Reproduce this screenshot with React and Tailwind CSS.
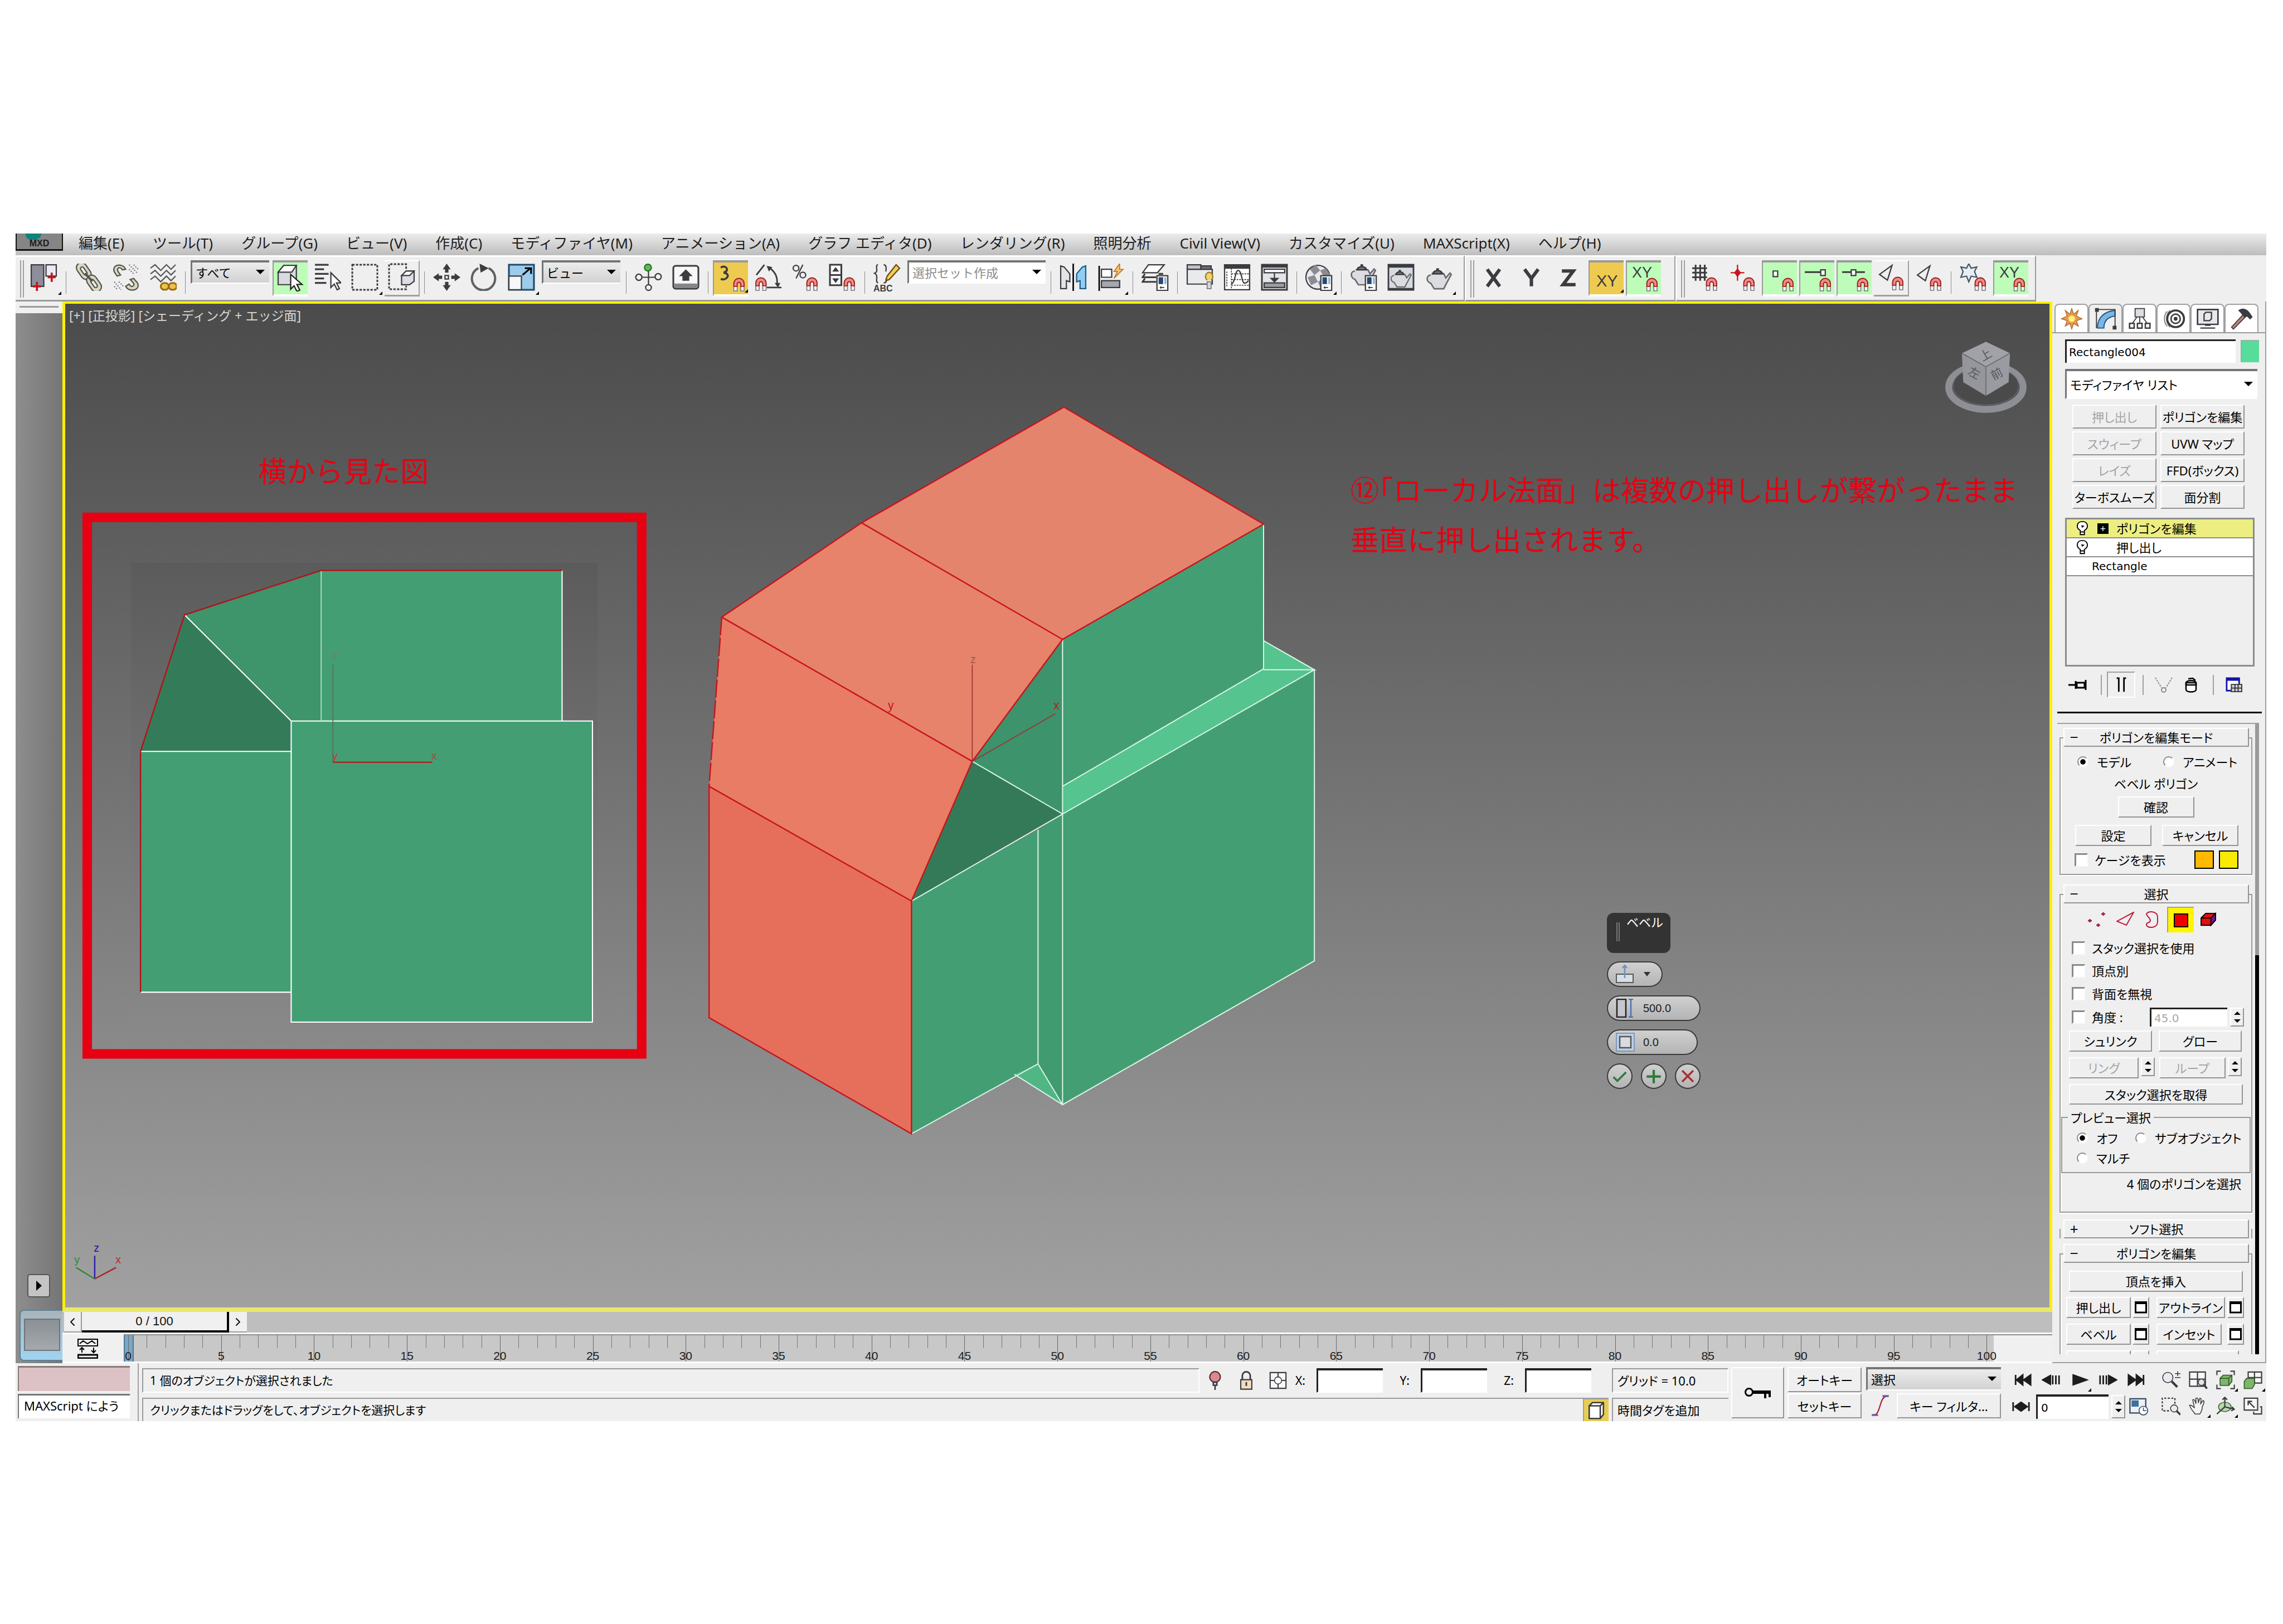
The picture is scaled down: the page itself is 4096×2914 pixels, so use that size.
import { ChevronLeft, ChevronRight } from 'lucide-react'

const MENUS = [
  '編集(E)', 'ツール(T)', 'グループ(G)', 'ビュー(V)', '作成(C)', 'モディファイヤ(M)', 'アニメーション(A)',
  'グラフ エディタ(D)', 'レンダリング(R)', '照明分析', 'Civil View(V)', 'カスタマイズ(U)', 'MAXScript(X)', 'ヘルプ(H)',
]

const INK = '#3b3b40'

function Svg({ children, className = 'size-[49px]', box = '0 0 24 24' }) {
  return (
    <svg viewBox={box} className={className} fill="none" stroke={INK} strokeWidth="1.1" aria-hidden="true">
      {children}
    </svg>
  )
}

function Magnet({ x = 12, y = 12 }) {
  return (
    <g transform={`translate(${x} ${y})`}>
      <path d="M1.5 11.5V5a4.5 4.5 0 0 1 9 0v6.5H7.6V5.5a1.6 1.6 0 0 0-3.2 0v6z" fill="#fff" stroke="#777" strokeWidth=".8" />
      <path d="M1.5 7.5V5a4.5 4.5 0 0 1 9 0v2.5H7.6v-2a1.6 1.6 0 0 0-3.2 0v2z" fill="#ee8b86" stroke="#a01c1c" strokeWidth=".9" />
    </g>
  )
}

function Teapot({ x = 0, y = 0, s = 1 }) {
  return (
    <g transform={`translate(${x} ${y}) scale(${s})`}>
      <path d="M5 7h9l1.5 3 3-3.5 1 1-3.5 6.5-2 4H7l-2.5-4C1 13 1 8 4.5 8" fill="#dadcdf" stroke="#6b6b70" />
      <path d="M6 7c1-3 6-3 7 0z" fill="#77787c" stroke={INK} />
      <path d="M9.5 4.5V3" strokeWidth="2" />
    </g>
  )
}

function Card({ x = 13, y = 10 }) {
  return (
    <g transform={`translate(${x} ${y})`}>
      <rect x=".6" y=".6" width="9.5" height="13" fill="#fff" />
      <path d="M2 2h4v6H2z" fill="#27496f" stroke="none" />
      <path d="M7 2h2v6H7z" fill="#9fb8d0" stroke="none" />
      <path d="M3 11h4M4 10v2" strokeWidth=".8" />
    </g>
  )
}

const ICONS = {
  undoView: (
    <>
      <path d="M1 1h11v19H1z" fill="#8d8e9a" />
      <path d="M14 1h9v10h-9z" fill="#e9ebf3" />
      <path d="M6 16v8M2.5 20h7M19 8v8M15.5 12h7" stroke="#c8141c" strokeWidth="1.8" />
    </>
  ),
  link: (
    <g stroke="#55544c">
      <rect x="0" y="2" width="16" height="9" rx="4.5" transform="rotate(55 8 6.500)" fill="#d9d6c4" />
      <rect x="4" y="5" width="8" height="3" rx="1.500" transform="rotate(55 8 6.500)" fill="#f0f0f0" />
      <rect x="9" y="13" width="16" height="9" rx="4.5" transform="rotate(55 17 17.500)" fill="#d9d6c4" />
      <rect x="13" y="16" width="8" height="3" rx="1.500" transform="rotate(55 17 17.500)" fill="#f0f0f0" />
      <path d="m9 8.500 6.500 7" strokeWidth="2" />
    </g>
  ),
  unlink: (
    <g stroke="#55544c">
      <path d="M12 5C10 0 2 0 1.500 5c0 3 2 4 3 6l3-1C6 8 4 6 5 4.500c1-1.500 3-1 4 1z" fill="#d9d6c4" />
      <path d="M12 20c3 5 11 4 11-1 0-3-3-4-4-6l-3 1c2 2 4 4 3 5-1 2-3 1-4-1z" fill="#d9d6c4" />
      <path d="M15 1l7 7M15 5l4 4M19 1l4 4M2 16l6 7M2 20l3 3M6 16l4 4" stroke="#777" strokeDasharray="1 1.200" />
    </g>
  ),
  bind: (
    <>
      <path d="M1 4l4-3 5 5 5-5 4 4 4-4M1 9l4-3 5 5 5-5 4 4 4-4M1 14l4-3 5 5 5-5 4 4 4-4" stroke="#55565a" />
      <rect x="10" y="17" width="7" height="6" rx="3" fill="#efc04a" stroke="#9a6c0c" strokeWidth="1.500" />
      <rect x="17" y="17" width="7" height="6" rx="3" fill="#efc04a" stroke="#9a6c0c" strokeWidth="1.500" />
    </>
  ),
  select: (
    <>
      <path d="M1 7l5-6h11v14l-3 3H1z" fill="#d9dadf" />
      <path d="M1 7l5-6h11l-4 6z" fill="#fff" />
      <path d="M12 9v13l3-3 2.500 5 2.500-1.200-2.500-5H22z" fill="#fff" stroke="#222" />
    </>
  ),
  selectName: (
    <>
      <path d="M1 1h12M1 5h8M1 9h12M1 13h8M1 17h10" strokeWidth="1.600" />
      <path d="M15 8v13l3-3 2.500 5 2-1-2.500-5h4z" fill="#fff" />
    </>
  ),
  region: <path d="M1 1h22v22H1z" strokeDasharray="2 1.200" strokeWidth="1.400" />,
  windowCross: (
    <>
      <path d="M16 5V1H1v22h15v-3" strokeDasharray="2 1.200" strokeWidth="1.400" />
      <path d="M12 11l4-4h7v9l-4 3h-7z" fill="#dcdde2" />
      <path d="M12 11l4-4h7l-4 4z" fill="#fff" />
    </>
  ),
  move: (
    <g fill={INK} stroke="none">
      <path d="M12 0l3.500 5h-2v3h-3V5h-2zM12 24l-3.500-5h2v-3h3v3h2zM0 12l5-3.500v2h3v3H5v2zM24 12l-5 3.500v-2h-3v-3h3v-2z" />
      <path d="M10.500 10.500h3v3h-3z" fill="#fff" stroke={INK} />
    </g>
  ),
  rotate: (
    <>
      <path d="M7 4a10.200 10.200 0 1 0 9 0" stroke="#606166" strokeWidth="2" />
      <path d="M8 0l8 4-7 4z" fill={INK} stroke="none" />
    </>
  ),
  scale: (
    <>
      <path d="M1 1h22v22H1z" fill="#9dcbeb" stroke="#1f4a6b" strokeWidth="1.500" />
      <path d="M1 11h11v12H1z" fill="#f4f8fb" stroke={INK} />
      <path d="M13 10l7-6M15 4h5.500v5" stroke="#000" strokeWidth="1.500" />
    </>
  ),
  pivot: (
    <>
      <path d="M12 5v14M4 12h16" />
      <circle cx="11.500" cy="3.500" r="3" fill="#5dbb52" stroke="#2a6e25" />
      <circle cx="3.500" cy="12" r="2.700" fill="#f0f0f0" />
      <circle cx="20.500" cy="11.500" r="2.700" fill="#f0f0f0" />
      <circle cx="12" cy="21" r="2.500" fill="#f0f0f0" />
    </>
  ),
  keyboard: (
    <>
      <rect x="1" y="2" width="22" height="20" rx="2" fill="#f7f7f8" strokeWidth="1.500" />
      <path d="M2 17.500h20v4H2z" fill="#85868b" stroke="none" />
      <path d="M12 5l6 6h-3v4H9v-4H6z" fill={INK} stroke="none" />
    </>
  ),
  snap3: (
    <>
      <path d="M3 3c5-3 8 3 2.500 4.500C12 8 9 15 3 13" strokeWidth="1.800" />
      <Magnet x={13} />
    </>
  ),
  snapAngle: (
    <>
      <path d="M2 10L9 1M13 3c6 5 8 9 7 16M11 21h13" strokeWidth="1.400" />
      <path d="M11 2l5 1-3 4zM18 17h5l-2 4z" fill={INK} stroke="none" />
      <Magnet x={0} />
    </>
  ),
  snapPercent: (
    <>
      <circle cx="4" cy="4" r="2.500" />
      <circle cx="10" cy="10" r="2.500" />
      <path d="M10 1L4 13" />
      <Magnet />
    </>
  ),
  snapSpinner: (
    <>
      <path d="M1 1h10v18H1zM1 10h10" fill="#f7f7f8" strokeWidth="1.500" />
      <path d="M6 3l3 4H3zM6 17l3-4H3z" fill={INK} stroke="none" />
      <Magnet />
    </>
  ),
  namedSets: (
    <>
      <path d="M4 1C2 1 3 4 3 6c0 1-1 2-2 2.500C2 9 3 10 3 12c0 2-1 4 1 5M9 1c3 0 2 4 2 6M9 17c2 0 3-1 2-4" />
      <path d="M20 1l3 3L14 14l-3 1 1-4z" fill="#f2cf55" stroke="#6b4b14" />
    </>
  ),
  mirror: (
    <>
      <path d="M1 2l3 1 5 6v7L6 15v7H1z" fill="#e3e4e8" />
      <path d="M23 2l-3 1-5 6v7l3-1v7h5z" fill="#8fcdf1" stroke="#1f5d87" />
      <path d="M12 0v24" stroke="#000" strokeWidth="1.300" />
    </>
  ),
  align: (
    <>
      <path d="M2 2v22" stroke="#000" strokeWidth="1.300" />
      <path d="M4 5h9v7H4z" fill="#fff" />
      <path d="M4 15h16v6H4z" fill="#a7a8ae" />
      <path d="M20 0l-5 7h3l-3 6 8-8h-3z" fill="#f7c173" stroke="#b97421" strokeWidth=".8" />
    </>
  ),
  layers: (
    <>
      <path d="M6 1h14l-6 7H1z" fill="#fff" />
      <path d="M3 9l-2 3h12M3 13l-2 3h12M15 9h4" strokeWidth="1.500" />
      <Card />
    </>
  ),
  ribbon: (
    <>
      <path d="M1 5h22v13H1z" fill="#e9eaee" />
      <path d="M1 1h12v4H1z" fill="#c3c4ca" />
      <path d="M13 2h9v3h-9z" fill="#6d6e74" />
      <path d="M18.500 14.500a3.200 3.700 0 1 1 3.500 0" fill="#f5d263" stroke="#9a7a25" />
      <path d="M18.500 16h3.500v6h-3.500z" fill="#d6d7dc" stroke="#77787c" strokeWidth=".8" />
    </>
  ),
  curveEditor: (
    <>
      <path d="M1 1h22v22H1z" fill="#fff" />
      <path d="M1 1h22v3H1z" fill={INK} />
      <path d="M7 4v19M3 7v13M7 9h16M7 14h16M7 19h16" strokeWidth=".8" strokeDasharray="1.500 .8" />
      <path d="M7 18C11 16 10 6 13 6s3 10 5 11 3-1 4-2" />
    </>
  ),
  schematic: (
    <>
      <path d="M1 1h22v22H1z" fill="#e4e5e8" strokeWidth="1.500" />
      <path d="M1 1h22v2H1z" fill={INK} />
      <path d="M3 5h18v3H3z" fill="#fff" />
      <path d="M3 17h18v4H3z" fill="#9c9da3" />
      <path d="M12 8v8M9 13l3 3 3-3z" fill={INK} />
    </>
  ),
  material: (
    <>
      <circle cx="11" cy="12" r="10.500" fill="#e8e9ec" />
      <path d="M4 5l5-4 4 5-5 4zM13 6l5-2 4 6-5 3zM2 12l6-2 3 6-6 3zM11 16l5-3 4 6-6 4z" fill="#8b8c92" stroke="none" />
      <Card />
    </>
  ),
  renderSetup: (
    <>
      <Teapot x={-1} y={-3} s={1.2} />
      <Card />
    </>
  ),
  renderFrame: (
    <>
      <path d="M1 1h22v22H1z" fill="#d5dbe1" strokeWidth="1.400" />
      <path d="M1 1h22v2H1zM1 22h22v1H1z" fill={INK} />
      <Teapot x={1.5} y={2.5} />
    </>
  ),
  render: <Teapot x={0} y={0.5} s={1.2} />,
  axisX: <path d="M6 5l11 15M17 5L6 20" strokeWidth="3" />,
  axisY: <path d="M6 5l6 8 6-8M12 12v8" strokeWidth="3" />,
  axisZ: <path d="M6 6.500h10L7 18.500h11" strokeWidth="3" />,
  grid: (
    <>
      <path d="M4 1v14M8 1v14M12 1v14M1 4h13M1 8h13M1 12h13" strokeWidth="1.500" />
      <Magnet />
    </>
  ),
  pivotSnap: (
    <>
      <path d="M8 1v14M2 8h12" stroke="#c8141c" />
      <path d="M8 4l3 4-3 4-3-4z" fill="#c8141c" stroke="none" />
      <Magnet />
    </>
  ),
  vertexSnap: (
    <>
      <path d="M6 6h4v5H6z" fill="#fff" />
      <Magnet x={13} />
    </>
  ),
  endSnap: (
    <>
      <path d="M1 7h15" strokeWidth="1.500" />
      <path d="M15 5h4v5h-4z" fill="#fff" />
      <Magnet x={13} />
    </>
  ),
  midSnap: (
    <>
      <path d="M1 7h20" strokeWidth="1.500" />
      <path d="M9 5h4v5H9z" fill="#fff" />
      <Magnet x={13} />
    </>
  ),
  edgeSnap: (
    <>
      <path d="M13 2L2 10l7 5z" />
      <Magnet />
    </>
  ),
  frozenSnap: (
    <>
      <path d="M8 0l2 4 5-1-2 4 2 5-5-1-2 5-2-5-5 1 2-5-2-4 5 1z" fill="#e6eef5" stroke="#4a5663" />
      <Magnet />
    </>
  ),
  vertexXY: <Magnet x={13} />,
}

function Tool({ icon, text, state, flyout }) {
  const looks = {
    green: 'bg-[#bdfdb9] border-t-4 border-l-2 border-t-[#9a9a9a] border-l-[#9a9a9a] border-b-4 border-b-white',
    gold: 'bg-[#eecb50] border-t-4 border-l-2 border-t-[#9a9a9a] border-l-[#9a9a9a] border-b-4 border-b-white',
    raised: 'border-t-2 border-r-2 border-b-3 border-t-white border-r-[#a0a0a0] border-b-[#a0a0a0]',
  }
  return (
    <button
      aria-label={icon}
      className={`relative mx-[2px] flex h-[65px] w-[63px] shrink-0 flex-col items-center ${state ? `pt-[3px] ${looks[state]}` : 'pt-[6px]'}`}
    >
      {icon && <Svg>{ICONS[icon]}</Svg>}
      {text && (
        <span className={`absolute font-['Liberation_Sans',sans-serif] leading-none text-[#3b3b40] ${text.cls}`}>{text.value}</span>
      )}
      {flyout && <span className="absolute right-0 bottom-[3px] border-[3px] border-transparent border-r-black border-b-black" />}
    </button>
  )
}

const Sep = () => <span className="mx-[6px] mt-[20px] h-[40px] w-px shrink-0 bg-[#8c8c8c]" />

const Handle = () => (
  <span className="mr-[2px] ml-[8px] h-[67px] w-[7px] shrink-0 border-x-2 border-[#a0a0a0]" />
)

function Combo({ label, value, className, muted, white, size = 'text-[22px]' }) {
  return (
    <div className={`relative shrink-0 ${className}`}>
      <select
        aria-label={label}
        className={`h-full w-full appearance-none border-t-4 border-l-3 border-t-[#757575] border-l-[#757575] border-b-2 border-b-white pl-[6px] outline-none ${size} ${white ? 'bg-white' : 'bg-linear-to-b from-[#ececec] to-[#d2d2d2]'} ${muted ? 'text-[#8c8c8c]' : 'text-black'}`}
      >
        <option>{value}</option>
      </select>
      <svg viewBox="0 0 16 8" className="pointer-events-none absolute top-1/2 right-[8px] h-[8px] w-[16px] -translate-y-1/2" aria-hidden="true">
        <path d="M0 0h16L8 8z" />
      </svg>
    </div>
  )
}

function MenuBar() {
  return (
    <nav className="flex h-[39px] items-start bg-linear-to-b from-[#ececec] to-[#bdbdbd]">
      <div className="relative h-[31px] w-[85px] shrink-0 overflow-hidden border-x-2 border-b-3 border-[#111] bg-[#858585]">
        <svg viewBox="0 0 80 12" className="absolute top-0 left-[12px] h-[11px] w-[80px]" aria-hidden="true">
          <path d="M0 0h32l-3 8-9 4H8L2 8z" fill="#0f827c" />
        </svg>
        <span className="absolute inset-x-0 bottom-0 text-center font-['Liberation_Sans',sans-serif] text-[16px] leading-[20px] font-bold text-[#1c1c1c]">MXD</span>
      </div>
      <ul className="flex gap-[51px] pl-[28px] text-[26px] leading-[35px] text-[#1d1d1d]">
        {MENUS.map((m) => (
          <li key={m}>
            <button className="whitespace-nowrap">{m}</button>
          </li>
        ))}
      </ul>
    </nav>
  )
}

function Toolbar() {
  return (
    <div className="flex h-[83px] bg-[#efefef]">
      <div className="flex items-start border-t-3 border-r-2 border-b-3 border-t-white border-r-[#9a9a9a] border-b-[#9a9a9a] pt-[6px] pr-[12px]">
        <Handle />
        <Tool icon="undoView" flyout />
        <Sep />
        <Tool icon="link" />
        <Tool icon="unlink" />
        <Tool icon="bind" />
        <Sep />
        <Combo label="選択フィルタ" value="すべて" className="mr-[4px] ml-[3px] h-[42px] w-[141px]" />
        <Tool icon="select" state="green" />
        <Tool icon="selectName" />
        <Tool icon="region" flyout />
        <Tool icon="windowCross" state="raised" />
        <Sep />
        <Tool icon="move" />
        <Tool icon="rotate" />
        <Tool icon="scale" flyout />
        <Combo label="参照座標系" value="ビュー" className="mr-[4px] ml-[3px] h-[42px] w-[141px]" />
        <Sep />
        <Tool icon="pivot" />
        <Tool icon="keyboard" />
        <Sep />
        <Tool icon="snap3" state="gold" flyout />
        <Tool icon="snapAngle" />
        <Tool icon="snapPercent" />
        <Tool icon="snapSpinner" />
        <Sep />
        <Tool icon="namedSets" text={{ value: 'ABC', cls: 'bottom-[6px] left-[7px] text-[16px] font-bold' }} />
        <Combo label="名前付き選択セット" value="選択セット作成" white muted className="mr-[3px] ml-[3px] h-[42px] w-[248px]" />
        <Sep />
        <Tool icon="mirror" />
        <Tool icon="align" flyout />
        <Sep />
        <Tool icon="layers" />
        <Sep />
        <Tool icon="ribbon" />
        <Tool icon="curveEditor" />
        <Tool icon="schematic" />
        <Sep />
        <Tool icon="material" flyout />
        <Sep />
        <Tool icon="renderSetup" />
        <Tool icon="renderFrame" />
        <Tool icon="render" flyout />
      </div>
      <div className="flex items-start border-t-3 border-r-2 border-b-3 border-l-2 border-white border-r-[#9a9a9a] border-b-[#9a9a9a] pt-[6px] pr-[22px]">
        <Handle />
        <Tool icon="axisX" />
        <Tool icon="axisY" />
        <Tool icon="axisZ" />
        <Tool state="gold" flyout text={{ value: 'XY', cls: 'top-[19px] left-[12px] text-[29px]' }} />
        <Tool icon="vertexXY" state="green" text={{ value: 'XY', cls: 'top-[5px] left-[9px] text-[27px]' }} />
      </div>
      <div className="flex items-start border-t-3 border-r-2 border-b-3 border-l-2 border-white border-r-[#9a9a9a] border-b-[#9a9a9a] pt-[6px] pr-[10px]">
        <Handle />
        <Tool icon="grid" />
        <Tool icon="pivotSnap" />
        <Tool icon="vertexSnap" state="green" />
        <Tool icon="endSnap" state="green" />
        <Tool icon="midSnap" state="green" />
        <Tool icon="edgeSnap" state="raised" />
        <Tool icon="edgeSnap" />
        <Sep />
        <Tool icon="frozenSnap" />
        <Tool icon="vertexXY" state="green" text={{ value: 'XY', cls: 'top-[5px] left-[9px] text-[27px]' }} />
      </div>
    </div>
  )
}

function Scene() {
  return (
    <svg
      viewBox="144 669 4373 2213"
      preserveAspectRatio="none"
      className="absolute inset-0 h-full w-full"
      fontFamily="'Liberation Sans', sans-serif"
      aria-hidden="true"
    >
      <defs>
        <linearGradient id="patch" x1="0" y1="0" x2="0" y2="1">
          <stop offset="0" stopColor="#5b5b5b" />
          <stop offset="1" stopColor="#888888" />
        </linearGradient>
      </defs>

      {/* side view */}
      <rect x="289" y="1241" width="1029" height="1014" fill="url(#patch)" />
      <path d="M708 1257H1239V1589H708z" fill="#439f73" />
      <path d="M708 1257L407 1355 642 1589H708z" fill="#3e946b" />
      <path d="M407 1355L310 1656H642V1589z" fill="#347c59" />
      <path d="M310 1656H642V2187H310z" fill="#439f73" />
      <path d="M642 1589H1306V2253H642z" fill="#439f73" />
      <g fill="none" stroke="#fff" strokeWidth="2.500">
        <path d="M642 1589H1306V2253H642zM1239 1257V1589M407 1355L642 1589M310 1656H642M310 2187H642" />
        <path d="M708 1257V1589" stroke="#a5dcc0" />
      </g>
      <path d="M310 2187V1656L407 1355 708 1257H1239" fill="none" stroke="#b3131b" strokeWidth="3" />
      <g strokeWidth="2" fill="none">
        <path d="M734 1465V1680" stroke="#5d6a55" />
        <path d="M734 1680H953" stroke="#a8262a" strokeWidth="3" />
      </g>
      <text x="732" y="1454" fontSize="24" fill="#777c66">z</text>
      <text x="732" y="1674" fontSize="24" fill="#b8402f">y</text>
      <text x="951" y="1674" fontSize="24" fill="#b8402f">x</text>
      <rect x="192.500" y="1140" width="1222" height="1183" fill="none" stroke="#e60012" strokeWidth="21" />

      {/* extruded body */}
      <path d="M2345 897L2785 1155 2342 1409 1899 1152z" fill="#e5846d" />
      <path d="M1899 1152L2342 1409 2143 1678 1591 1360z" fill="#e7826b" />
      <path d="M1591 1360L2143 1678 2009 1986 1563 1733z" fill="#e87c65" />
      <path d="M1563 1733L2009 1986V2499L1563 2243z" fill="#e66f5c" />
      <path d="M2342 1409L2785 1155V1478L2342 1733z" fill="#439f73" />
      <path d="M2785 1412L2897 1476 2342 1794V1733L2785 1474z" fill="#55c48e" />
      <path d="M2342 1409V1794L2143 1678z" fill="#3d936b" />
      <path d="M2143 1678L2342 1794 2009 1986z" fill="#347a58" />
      <path d="M2009 1986L2288 1829V2345L2009 2499z" fill="#439f73" />
      <path d="M2288 1829L2342 1794V2435L2288 2345z" fill="#419b70" />
      <path d="M2236 2368L2288 2345 2342 2435z" fill="#4fb684" />
      <path d="M2342 1794L2897 1476V2118L2342 2435z" fill="#439f73" />
      <g fill="none" stroke="#d9f3e6" strokeWidth="2.500">
        <path d="M2342 1794L2897 1476V2118L2342 2435zM2785 1155V1474L2342 1733M2785 1412L2897 1476H2785M2342 1409V1794L2143 1678M2009 1986L2342 1794M2288 1829V2345L2342 2435 2236 2368M2009 2499L2288 2345" />
      </g>
      <g fill="none" stroke="#c8141c" strokeWidth="3">
        <path d="M1591 1360L1899 1152 2345 897 2785 1155 2342 1409 2143 1678 2009 1986V2499L1563 2243V1733L2009 1986M1899 1152L2342 1409M1591 1360L2143 1678" />
        <path d="M1591 1360L1563 1733" strokeDasharray="40 6" />
        <path d="M2143 1465V1678L2326 1573" strokeWidth="2" stroke="#a03030" />
      </g>
      <text x="2139" y="1462" fontSize="24" fill="#a05a4a">z</text>
      <text x="1957" y="1564" fontSize="26" fill="#c8141c">y</text>
      <text x="2322" y="1564" fontSize="26" fill="#c8141c">x</text>

      {/* world axis */}
      <g fill="none" strokeWidth="3">
        <path d="M209 2768V2819" stroke="#2a1fb0" />
        <path d="M209 2819L168 2794" stroke="#2c8a3c" />
        <path d="M209 2819L256 2794" stroke="#a8242c" />
      </g>
      <text x="207" y="2759" fontSize="24" fill="#1d12b0">z</text>
      <text x="164" y="2785" fontSize="24" fill="#2c8a3c">y</text>
      <text x="255" y="2785" fontSize="24" fill="#c02430">x</text>

      {/* view cube */}
      <ellipse cx="4377" cy="853" rx="82" ry="49" fill="#55565a" fillOpacity=".6" stroke="#8d8f94" strokeWidth="15" />
      <ellipse cx="4377" cy="850" rx="72" ry="42" fill="#4a4a4b" stroke="#5f6166" strokeWidth="2" />
      <path d="M4377 753L4430 778 4377 808 4324 778z" fill="#a0a2a8" />
      <path d="M4324 778L4377 808V872L4327 842z" fill="#94969c" />
      <path d="M4430 778L4377 808V872L4427 842z" fill="#999ba1" />
      <path d="M4324 778L4377 808 4430 778M4377 808V872" fill="none" stroke="#66686e" strokeWidth="2" />
      <g fill="#56585e" fontFamily="'Noto Sans CJK JP', sans-serif" fontSize="26" textAnchor="middle">
        <text transform="translate(4381 790) rotate(-30)">上</text>
        <text transform="translate(4347 830) rotate(28)">左</text>
        <text transform="translate(4405 832) rotate(-28)">前</text>
      </g>
    </svg>
  )
}

const pill = 'flex h-[46px] items-center rounded-full border-2 border-[#3a3a3a] bg-linear-to-b from-[#d0d0d0] to-[#b4b4b4]'

function BevelCaddy() {
  return (
    <div className="absolute top-[1093px] left-[2766px] flex flex-col items-start gap-[15px] text-[20px] text-[#222]">
      <div className="relative h-[72px] w-[114px] rounded-[12px] bg-[#333] text-white">
        <span className="absolute top-[17px] left-[17px] h-[34px] w-[6px] border-x-2 border-[#777]" />
        <span className="absolute top-[2px] left-[35px] text-[22px] leading-[28px]">ベベル</span>
      </div>
      <button aria-label="ベベル タイプ" className={`${pill} w-[100px] gap-[18px] pl-[14px]`}>
        <Svg box="0 0 32 34" className="h-[34px] w-[32px]">
          <path d="M1 17h30v15H1z" fill="#d8dfe4" strokeWidth="2" stroke="#56585c" />
          <path d="M16 24V2M12 6l4-5 4 5" stroke="#6f8fc0" strokeWidth="2.500" />
        </Svg>
        <svg viewBox="0 0 12 8" className="h-[8px] w-[12px]" aria-hidden="true"><path d="M0 0h12L6 8z" fill="#333" /></svg>
      </button>
      <label className={`${pill} w-[168px] gap-[15px] pl-[14px]`}>
        <Svg box="0 0 34 34" className="size-[34px] shrink-0">
          <path d="M2 1h16v32H2z" fill="#c5c7cf" strokeWidth="2.500" stroke="#222" />
          <path d="M27 1v32M23 1h8M23 33h8" stroke="#4a72b8" strokeWidth="2.500" />
        </Svg>
        <input aria-label="高さ" defaultValue="500.0" className="w-[80px] bg-transparent font-['Liberation_Sans',sans-serif] outline-none" />
      </label>
      <label className={`${pill} w-[163px] gap-[15px] pl-[14px]`}>
        <Svg box="0 0 34 34" className="size-[34px] shrink-0">
          <path d="M1 1h32v32H1z" fill="#bfd0e2" stroke="#7c98bb" strokeWidth="2" />
          <path d="M7 7h20v20H7z" fill="#d8dce2" stroke="#555" strokeWidth="2.500" />
        </Svg>
        <input aria-label="アウトライン量" defaultValue="0.0" className="w-[80px] bg-transparent font-['Liberation_Sans',sans-serif] outline-none" />
      </label>
      <div className="flex gap-[15px]">
        <button aria-label="OK" className={`${pill} w-[46px] justify-center`}>
          <Svg className="size-[34px]"><path d="M4 13l5 5L20 7" stroke="#2f7a38" strokeWidth="2.500" /></Svg>
        </button>
        <button aria-label="適用して続行" className={`${pill} w-[46px] justify-center`}>
          <Svg className="size-[34px]"><path d="M12 4v17M3 12.500h18" stroke="#2f7a38" strokeWidth="3" /></Svg>
        </button>
        <button aria-label="キャンセル" className={`${pill} w-[46px] justify-center`}>
          <Svg className="size-[34px]"><path d="M5 5l14 14M19 5L5 19" stroke="#a83030" strokeWidth="2.500" /></Svg>
        </button>
      </div>
    </div>
  )
}

function Viewport() {
  return (
    <div className="relative flex-1 border-[5px] border-t-4 border-b-8 border-[#fff000] border-b-[#e9e96a] bg-linear-to-b from-[#4b4b4b] to-[#a1a1a1]">
      <Scene />
      <p className="absolute top-[6px] left-[7px] text-[23px] leading-[30px] whitespace-pre text-[#d6d6d6]">[+] [正投影] [シェーディング + エッジ面]</p>
      <p className="absolute top-[262px] left-[346px] text-[51px] leading-[76px] text-[#e60012]">横から見た図</p>
      <p className="absolute top-[290px] left-[2306px] text-[51px] leading-[89px] text-[#e60012]">
        ⑫<span className="[font-feature-settings:'halt']">「</span>ローカル法面」は複数の押し出しが繋がったまま
        <br />
        垂直に押し出されます。
      </p>
      <BevelCaddy />
    </div>
  )
}

function TimeLine() {
  return (
    <div className="shrink-0">
      <div className="flex h-[37px] bg-[#bebebe] font-['Liberation_Sans',sans-serif] text-[22px] text-[#111]">
        <button aria-label="前のフレーム" className="ml-[3px] flex w-[32px] items-center justify-center border-r-2 border-b-2 border-[#9a9a9a] bg-[#f0f0f0]">
          <ChevronLeft size={24} strokeWidth={2} />
        </button>
        <button className="w-[264px] border-r-4 border-b-4 border-black bg-[#f0f0f0]">0 / 100</button>
        <button aria-label="次のフレーム" className="flex w-[32px] items-center justify-center border-b-2 border-[#9a9a9a] bg-[#f0f0f0]">
          <ChevronRight size={24} strokeWidth={2} />
        </button>
      </div>
      <div className="flex h-[55px] border-t-3 border-b-3 border-white bg-[#f0f0f0]">
        <div className="flex w-[110px] shrink-0 justify-center pt-[8px] pr-[20px]">
          <Svg box="0 0 37 36" className="h-[36px] w-[37px]">
            <g stroke="#000" strokeWidth="2">
              <path d="M1 1h35v12H1zM4 9l6-5 8 5 8-5 6 5M8 25v-9M4 20l4-4 4 4M29 16v9M25 21l4 4 4-4" />
              <path d="M1 29h35v6H1z" strokeWidth="3" />
            </g>
          </Svg>
        </div>
        <div className="relative flex flex-1 border-t-2 border-[#8e8e8e] bg-[#c8c8c8] pr-[10px] pl-[8px]">
          <span className="absolute inset-y-0 left-0 w-[18px] border-x-2 border-[#4d7896] bg-[#7ba6c6]" />
          {Array.from({ length: 101 }, (_, i) => (
            <div key={i} className={i === 100 ? 'relative w-[2px]' : 'relative flex-1'}>
              <span className={`absolute top-0 left-0 w-px ${i % 5 ? 'h-[23px] bg-[#777]' : 'h-full bg-[#666]'}`} />
              {i % 5 === 0 && (
                <span className="absolute top-[26px] left-0 -translate-x-1/2 font-['Liberation_Sans',sans-serif] text-[21px] leading-[22px] text-[#1c1c1c]">{i}</span>
              )}
            </div>
          ))}
        </div>
        <div className="w-[105px] shrink-0 border-t-2 border-[#8e8e8e]" />
      </div>
    </div>
  )
}

function SideBar() {
  return (
    <aside className="flex w-[84px] shrink-0 flex-col bg-linear-to-r from-[#8e8e8e] to-[#757575]">
      <div className="h-[21px] bg-[#f0f0f0] px-[7px] pt-[8px]">
        <div className="h-[3px] bg-[#9a9a9a]" />
      </div>
      <button aria-label="ビューポート レイアウトを展開" className="mt-auto ml-[21px] flex h-[42px] w-[41px] items-center justify-center rounded-[5px] border-2 border-[#555] bg-[#c4c4c4]">
        <svg viewBox="0 0 10 18" className="h-[18px] w-[10px]" aria-hidden="true"><path d="M0 0l10 9-10 9z" /></svg>
      </button>
      <div className="mt-[22px] mb-[4px] ml-[7px] h-[92px] rounded-l-[8px] border-2 border-r-0 border-[#5f7f94] bg-linear-to-b from-[#a9b4bb] to-[#9fd4f2] pt-[14px] pl-[6px]">
        <div className="h-[58px] w-[65px] border-2 border-[#6f7479] bg-linear-to-b from-[#8b9094] to-[#a4a9ad]" />
      </div>
    </aside>
  )
}

const raised = 'border-2 border-white border-r-[#949494] border-b-[#949494] bg-[#efefef]'

function Btn({ children, className = '', disabled, label }) {
  return (
    <button aria-label={label} disabled={disabled} className={`flex items-center justify-center whitespace-nowrap ${raised} ${disabled ? 'text-[#a3a3a3]' : ''} ${className}`}>
      {children}
    </button>
  )
}

function Spin({ className = '' }) {
  return (
    <button aria-label="増減" className={`flex w-[25px] shrink-0 items-center justify-center ${raised} ${className}`}>
      <svg viewBox="0 0 12 22" className="h-[22px] w-[12px]" aria-hidden="true"><path d="M0 7l6-6 6 6zM0 15h12l-6 6z" /></svg>
    </button>
  )
}

function Radio({ name, label, checked, className = '' }) {
  return (
    <label className={`flex items-center gap-[15px] ${className}`}>
      <input
        type="radio"
        name={name}
        defaultChecked={checked}
        className="size-[20px] shrink-0 appearance-none rounded-full border-2 border-[#fafafa] border-t-[#8a8a8a] border-l-[#8a8a8a] bg-white checked:bg-[radial-gradient(circle,#000_38%,#fff_46%)]"
      />
      {label}
    </label>
  )
}

function Check({ label, className = '' }) {
  return (
    <label className={`flex h-[28px] items-center gap-[12px] whitespace-nowrap ${className}`}>
      <input type="checkbox" className="size-[24px] shrink-0 appearance-none border-t-3 border-r-2 border-b-2 border-l-3 border-[#fafafa] border-t-[#8a8a8a] border-l-[#8a8a8a] bg-white" />
      {label}
    </label>
  )
}

function Rollout({ title, closed, children, className = '' }) {
  return (
    <section className={className}>
      <button className={`relative z-10 mx-[7px] -mb-[17px] flex h-[34px] w-[333px] items-center justify-center ${raised}`}>
        <span className="absolute left-[8px] w-[18px] text-center font-['Liberation_Sans',sans-serif] text-[26px] leading-none">{closed ? '+' : '−'}</span>
        {title}
      </button>
      {closed ? (
        <div className="-mt-[10px] mb-[10px] h-[17px] border-x-2 border-[#9a9a9a]" />
      ) : (
        <div className="border-2 border-[#9a9a9a] shadow-[inset_2px_0_0_#fff,0_2px_0_#fff]">{children}</div>
      )}
    </section>
  )
}

const TABS = {
  create: (
    <>
      <path d="M12 1l2 6 5-4-2 6 6 3-6 2 2 6-5-3-2 6-2-6-5 3 2-6-6-2 6-3-2-6 5 4z" fill="#ee9b4d" stroke="#a8672c" strokeWidth=".8" />
      <circle cx="12" cy="12" r="3.500" fill="#fff27a" stroke="none" />
    </>
  ),
  modify: (
    <>
      <path d="M3 22C3 10 11 4 22 3v6c-8 1-12 5-12 13z" fill="#79b7e6" stroke="#23527a" />
      <path d="M2 22V2h20v20" />
      <path d="M1 1h3v3H1zM20 20h3v3h-3z" fill={INK} />
    </>
  ),
  hierarchy: (
    <>
      <path d="M7 1h10v9H7z" fill="#dcdde0" />
      <path d="M12 10v7M9 10l-5 7M15 10l5 7" />
      <path d="M1 17h5v5H1zM9.500 17h5v5h-5zM18 17h5v5h-5z" fill="#fff" strokeWidth="1.500" />
    </>
  ),
  motion: (
    <>
      <path d="M5 4C1 8 1 16 5 20M8 3C3 8 3 16 8 21" stroke="#77787c" />
      <circle cx="14" cy="12" r="9" fill="#fff" strokeWidth="2.200" />
      <circle cx="14" cy="12" r="5" strokeWidth="1.600" />
      <circle cx="14" cy="12" r="1.500" fill={INK} />
    </>
  ),
  display: (
    <>
      <path d="M1 2h22v16H1z" fill="#e6e8eb" strokeWidth="1.600" />
      <path d="M8 7l2-2h6v7l-2 2H8zM9 19h6M4 22h16" strokeWidth="1.400" />
    </>
  ),
  utilities: (
    <>
      <path d="M14 7L1 21l2 2L17 9z" fill="#b98a80" stroke="#4c3a36" />
      <path d="M9 3c4-3 9-1 12 4l2 3-2 2-3-3-3 1-4-5z" fill={INK} />
    </>
  ),
}

function Bulb() {
  return (
    <svg viewBox="0 0 22 30" className="h-[28px] w-[22px]" fill="#fff" stroke="#000" strokeWidth="2" aria-hidden="true">
      <path d="M7 19C-2 14 0 2 11 2s13 12 4 17v8H7zM7 22h8M9 10l4 1-3 2" />
    </svg>
  )
}

function WinBtn() {
  return (
    <Btn label="設定" className="w-[30px] shrink-0">
      <svg viewBox="0 0 22 24" className="h-[24px] w-[22px]" aria-hidden="true">
        <path d="M1.500 3h19v18h-19z" fill="#fff" stroke="#000" strokeWidth="3" />
        <path d="M0 1h22v5H0z" />
      </svg>
    </Btn>
  )
}

function CommandPanel() {
  return (
    <aside className="w-[384px] shrink-0 border-r-2 border-b-2 border-[#a0a0a0] bg-[#efefef] pt-[4px] text-[22px] leading-[28px] text-black [font-feature-settings:'palt']">
      <div className="flex border-b-2 border-[#9a9a9a] px-[4px]">
        {Object.entries(TABS).map(([name, art]) => (
          <button
            key={name}
            aria-label={name}
            className={`flex h-[51px] w-[61px] items-center justify-center rounded-t-[8px] border-2 border-b-0 border-[#a0a0a0] ${name === 'modify' ? 'bg-[#efefef]' : 'bg-white'}`}
          >
            <Svg className="size-[40px]">{art}</Svg>
          </button>
        ))}
      </div>
      <div className="mt-[11px] flex items-center gap-[9px] pr-[11px] pl-[23px]">
        <input
          aria-label="オブジェクト名"
          defaultValue="Rectangle004"
          className="h-[42px] min-w-0 flex-1 border-t-3 border-l-3 border-t-[#222] border-l-[#222] bg-white px-[4px] font-['DejaVu_Sans',sans-serif] text-[20px] outline-none"
        />
        <button aria-label="オブジェクト カラー" className="h-[40px] w-[33px] border-t-2 border-l-2 border-[#8fb5a2] bg-[#57dc9b]" />
      </div>
      <Combo label="モディファイヤ リスト" value="モディファイヤ リスト" white className="mt-[11px] mr-[14px] ml-[23px] h-[54px]" />
      <div className="mt-[10px] ml-[36px] grid w-[309px] grid-cols-2 gap-x-[7px] gap-y-[5px]">
        <Btn disabled className="h-[43px]">押し出し</Btn>
        <Btn className="h-[43px]">ポリゴンを編集</Btn>
        <Btn disabled className="h-[43px]">スウィープ</Btn>
        <Btn className="h-[43px]">UVW マップ</Btn>
        <Btn disabled className="h-[43px]">レイズ</Btn>
        <Btn className="h-[43px]">FFD(ボックス)</Btn>
        <Btn className="h-[43px]">ターボスムーズ</Btn>
        <Btn className="h-[43px]">面分割</Btn>
      </div>

      <ul className="mt-[16px] mr-[19px] ml-[23px] h-[267px] border-3 border-[#8c8c8c]">
        <li className="flex h-[34px] items-center border-b-2 border-[#8c8c8c] bg-[#ecee82] pl-[17px]">
          <Bulb />
          <span className="ml-[16px] flex h-[19px] w-[20px] items-center justify-center bg-black text-[18px] leading-none text-white">+</span>
          <span className="ml-[14px]">ポリゴンを編集</span>
        </li>
        <li className="flex h-[34px] items-center border-b-2 border-[#8c8c8c] bg-white pl-[17px]">
          <Bulb />
          <span className="ml-[50px]">押し出し</span>
        </li>
        <li className="flex h-[34px] items-center border-b-2 border-[#8c8c8c] bg-white pl-[45px] font-['DejaVu_Sans',sans-serif] text-[20px]">Rectangle</li>
      </ul>

      <div className="mt-[9px] flex h-[47px] items-center pl-[29px]">
        <Svg box="0 0 36 24" className="h-[24px] w-[36px]">
          <path d="M0 12h13M13 5v14M15 8h14v9H15zM31 3v18" stroke="#000" strokeWidth="3" />
        </Svg>
        <span className="ml-[22px] h-[36px] w-[2px] bg-[#a0a0a0]" />
        <button aria-label="最終結果を表示" className="ml-[9px] flex h-[47px] w-[51px] items-center justify-center border-2 border-white border-t-[#a0a0a0] border-l-[#a0a0a0]">
          <Svg box="0 0 20 30" className="h-[28px] w-[20px]">
            <path d="M1 2h4v26M19 2h-4v26" stroke="#000" strokeWidth="3" />
          </Svg>
        </button>
        <span className="ml-[13px] h-[36px] w-[2px] bg-[#a0a0a0]" />
        <Svg box="0 0 32 28" className="ml-[20px] h-[28px] w-[32px]">
          <path d="M1 1l11 18M31 1L20 19" stroke="#888" strokeWidth="2" strokeDasharray="3 2" />
          <circle cx="16" cy="23" r="4" stroke="#888" strokeWidth="2" />
        </Svg>
        <Svg box="0 0 22 28" className="ml-[22px] h-[28px] w-[22px]">
          <path d="M2 10h18v12c0 6-18 6-18 0z" fill="#fff" stroke="#000" strokeWidth="2.500" />
          <path d="M2 10c2-5 16-5 18 0v4H2zM6 3l8-1 5 4" stroke="#000" strokeWidth="2.500" />
        </Svg>
        <span className="ml-[28px] h-[36px] w-[2px] bg-[#a0a0a0]" />
        <Svg box="0 0 32 30" className="ml-[20px] h-[28px] w-[32px]">
          <path d="M2 2h24v24H2z" fill="#fff" stroke="#1313a8" strokeWidth="3" />
          <path d="M1 1h26v6H1z" fill="#1313a8" stroke="none" />
          <path d="M11 14h20v14H11z" fill="#d0d0d0" stroke="#333" strokeWidth="2" />
          <path d="M11 21h20M18 14v14M24 14v14" stroke="#333" strokeWidth="2" />
        </Svg>
      </div>

      <div className="mt-[25px] mr-[6px] ml-[9px] h-[3px] bg-black" />

      <div className="mt-[17px] mr-[11px] mb-[14px] ml-[9px] flex h-[1133px] overflow-hidden border-t-2 border-[#a0a0a0] pl-[4px]">
        <div className="w-[346px] shrink-0 pt-[7px]">
          <Rollout title="ポリゴンを編集モード">
            <div className="flex h-[56px] items-end pl-[30px]">
              <Radio name="mode" label="モデル" checked className="w-[154px]" />
              <Radio name="mode" label="アニメート" />
            </div>
            <p className="mt-[11px] text-center">ベベル ポリゴン</p>
            <Btn className="mx-auto mt-[9px] h-[38px] w-[137px]">確認</Btn>
            <div className="mt-[13px] flex gap-[19px] pl-[26px]">
              <Btn className="h-[38px] w-[137px]">設定</Btn>
              <Btn className="h-[38px] w-[137px]">キャンセル</Btn>
            </div>
            <div className="mt-[8px] mb-[9px] flex h-[33px] items-center gap-[9px] pr-[23px] pl-[25px]">
              <Check label="ケージを表示" className="flex-1" />
              <button aria-label="ケージ カラー" className="h-[33px] w-[35px] border-2 border-black bg-[#ffb900]" />
              <button aria-label="選択カラー" className="h-[33px] w-[35px] border-2 border-black bg-[#f8ea00]" />
            </div>
          </Rollout>

          <Rollout title="選択" className="mt-[17px]">
            <div className="flex items-center pt-[21px] pl-[48px]">
              <Svg box="0 0 32 28" className="h-[28px] w-[32px]">
                <path d="M1 16h7M4.500 13v6M16 24h7M19.500 21v6M25 4h7M28.500 1v6" stroke="#a01c3c" strokeWidth="2.500" />
              </Svg>
              <Svg box="0 0 32 28" className="ml-[20px] h-[28px] w-[32px]">
                <path d="M31 1L1 17l17 7z" stroke="#c01c3c" strokeWidth="2" />
              </Svg>
              <Svg box="0 0 24 32" className="ml-[20px] h-[32px] w-[24px]">
                <path d="M2 6C4 0 22 0 22 12v8c0 13-20 12-20 5 0-5 6-2 7-7 0-6-6-6-7-12z" stroke="#c01c3c" strokeWidth="2" />
              </Svg>
              <button aria-label="ポリゴン" className="ml-[15px] flex h-[46px] w-[48px] items-center justify-center border-t-2 border-l-2 border-[#a0a0a0] bg-[#fff500]">
                <span className="h-[25px] w-[26px] border-2 border-black bg-[#f00000]" />
              </button>
              <Svg box="0 0 30 28" className="ml-[12px] h-[26px] w-[28px]">
                <path d="M1 11l9-9h19v13l-9 10H1z" fill="#e01010" stroke="#000" strokeWidth="2" />
                <path d="M20 11l9-9v13l-9 10z" fill="#7a1090" stroke="#000" strokeWidth="2" />
                <path d="M1 11h19" stroke="#000" strokeWidth="2" />
              </Svg>
            </div>
            <div className="flex flex-col gap-[13px] pt-[14px] pl-[20px]">
              <Check label="スタック選択を使用" />
              <Check label="頂点別" />
              <Check label="背面を無視" />
            </div>
            <div className="mt-[11px] flex h-[34px] items-center pl-[20px]">
              <Check label="角度 :" className="w-[140px]" />
              <input
                aria-label="角度"
                disabled
                defaultValue="45.0"
                className="h-[34px] w-[139px] border-t-3 border-l-3 border-t-[#222] border-l-[#222] bg-white px-[5px] font-['DejaVu_Sans',sans-serif] text-[20px] text-[#a8a8a8]"
              />
              <Spin className="ml-[5px] h-[34px]" />
            </div>
            <div className="mt-[7px] grid grid-cols-2 gap-x-[12px] pr-[17px] pl-[15px]">
              <Btn className="h-[38px]">シュリンク</Btn>
              <Btn className="h-[38px]">グロー</Btn>
            </div>
            <div className="mt-[10px] flex pl-[15px]">
              <Btn disabled className="h-[38px] w-[125px]">リング</Btn>
              <Spin className="ml-[4px] h-[34px]" />
              <Btn disabled className="ml-[8px] h-[38px] w-[119px]">ループ</Btn>
              <Spin className="ml-[4px] h-[34px]" />
            </div>
            <Btn className="mt-[10px] ml-[15px] h-[37px] w-[312px]">スタック選択を取得</Btn>
            <fieldset className="mx-px mt-[9px] h-[114px] border-2 border-[#9a9a9a] pl-[26px]">
              <legend className="-ml-[16px] px-[5px]">プレビュー選択</legend>
              <div className="mt-[9px] flex h-[28px]">
                <Radio name="preview" label="オフ" checked className="w-[105px]" />
                <Radio name="preview" label="サブオブジェクト" className="whitespace-nowrap" />
              </div>
              <Radio name="preview" label="マルチ" className="mt-[8px]" />
            </fieldset>
            <p className="mt-[5px] pr-[18px] pb-[36px] text-right">4 個のポリゴンを選択</p>
          </Rollout>

          <Rollout title="ソフト選択" closed className="mt-[12px]" />

          <Rollout title="ポリゴンを編集" className="mt-[7px]">
            <div className="pt-[29px] pl-[10px]">
              <Btn className="ml-[5px] h-[38px] w-[312px]">頂点を挿入</Btn>
              <div className="mt-[9px] flex h-[38px]">
                <Btn className="w-[116px]">押し出し</Btn>
                <span className="ml-[3px] flex"><WinBtn /></span>
                <Btn className="ml-[13px] w-[123px]">アウトライン</Btn>
                <span className="ml-[4px] flex"><WinBtn /></span>
              </div>
              <div className="mt-[10px] flex h-[38px]">
                <Btn className="w-[116px]">ベベル</Btn>
                <span className="ml-[3px] flex"><WinBtn /></span>
                <Btn className="ml-[13px] w-[117px]">インセット</Btn>
                <span className="ml-[10px] flex"><WinBtn /></span>
              </div>
              <div className="mt-[10px] flex h-[38px]">
                <Btn className="w-[116px]" />
                <Btn className="ml-[3px] w-[30px]" />
                <Btn className="ml-[13px] w-[148px]" />
              </div>
            </div>
          </Rollout>
        </div>
        <div className="ml-[5px] w-[7px] shrink-0 bg-[#9a9a9a] pt-[415px]">
          <div className="h-full bg-black" />
        </div>
      </div>
    </aside>
  )
}

function Coord({ axis }) {
  return (
    <label className="flex items-center gap-[20px]">
      <span className="w-[22px] text-right">{axis}:</span>
      <input className="h-[44px] w-[119px] border-t-4 border-l-3 border-t-[#222] border-l-[#222] border-b-2 border-b-white bg-white outline-none" />
    </label>
  )
}

const PLAY = {
  start: 'M3 3v18M12 3v18L4 12zM22 3v18l-9-9z',
  prev: 'M11 4v16L1 12zM14 4v16M18 4v16M22 4v16',
  play: 'M4 3l18 9-18 9z',
  next: 'M13 4v16l10-8zM2 4v16M6 4v16M10 4v16',
  end: 'M21 3v18M12 3v18l8-9zM2 3v18l9-9z',
  keyMode: 'M2 4v16M22 4v16M4 12l7-7v14zM20 12l-7-7v14z',
}

function PlayIcon({ name, flyout }) {
  return (
    <button aria-label={name} className="relative flex size-[42px] items-center justify-center">
      <svg viewBox="0 0 24 24" className="h-[24px] w-[34px]" preserveAspectRatio="none" fill="#1d1d1d" stroke="#1d1d1d" strokeWidth="2" aria-hidden="true">
        <path d={PLAY[name]} />
      </svg>
      {flyout && <span className="absolute right-0 bottom-0 border-[3px] border-transparent border-r-black border-b-black" />}
    </button>
  )
}

const NAV = {
  zoom: <><circle cx="8" cy="9" r="6.500" fill="#e8ecf0" /><path d="M13 14l7 7" strokeWidth="3" /><path d="M17 4h7M20.500 1v6M17 9h7" /></>,
  zoomAll: <><path d="M1 2h20v18H1zM11 2v18M1 11h20" fill="#f7f7f7" strokeWidth="1.500" /><circle cx="16" cy="15" r="4" fill="#dfe5ea" /><path d="M19 18l4 5" strokeWidth="2.500" /></>,
  extents: <><path d="M1 6V1h5M18 1h5v5M23 18v5h-5M6 23H1v-5" strokeWidth="1.500" /><path d="M5 10l4-4h11v8l-4 5H5z" fill="#7fb56b" stroke="#2f5326" /><path d="M5 10h11l4-4M16 10v9" stroke="#2f5326" /></>,
  extentsAll: <><path d="M6 2h17v14H6zM14 2v14M6 9h17" fill="#f7f7f7" strokeWidth="1.500" /><path d="M1 14l3-4h10v8l-3 5H1z" fill="#7fb56b" stroke="#2f5326" /></>,
  regionZoom: <><path d="M17 9V2H1v16h9" strokeDasharray="2.500 2" strokeWidth="1.600" /><circle cx="16" cy="15" r="4.500" fill="#e8ecf0" /><path d="M19 18l5 5" strokeWidth="2.500" /></>,
  pan: <path d="M8 22C5 18 2 15 1 11c3-1 4 2 6 3L5 4c2-1 3 1 4 5V2c3-1 3 2 3 6l2-6c3 0 1 4 1 7l3-4c3 1 0 5-1 8 0 4-1 6-3 9z" fill="#f3f3f3" />,
  orbit: <><ellipse cx="11" cy="13" rx="8" ry="6" fill="#b9d6b0" stroke="#3f6f3b" /><path d="M11 1v12l12 3M11 13L1 22M8 4l3-3 3 3M20 13l3 3-4 2" strokeWidth="1.600" /></>,
  maximize: <><path d="M1 2h17v15H1z" fill="#f7f7f7" strokeWidth="1.500" /><path d="M14 14L6 6M6 11V6h5" strokeWidth="1.600" /><path d="M21 13h2v9H13v-3" strokeWidth="1.500" /></>,
}

function NavIcon({ name, flyout }) {
  return (
    <button aria-label={name} className="relative flex h-[42px] w-[49px] items-center justify-center">
      <Svg className="size-[34px]">{NAV[name]}</Svg>
      {flyout && <span className="absolute right-[2px] bottom-0 border-[3px] border-transparent border-r-black border-b-black" />}
    </button>
  )
}

function StatusBar() {
  return (
    <footer className="flex h-[104px] bg-[#efefef] text-[21px] leading-[28px] text-black [font-feature-settings:'palt']">
      <div className="w-[221px] shrink-0 border-r-2 border-[#a0a0a0] pt-[5px] pl-[4px]">
        <div className="h-[45px] w-[201px] border-t-3 border-l-2 border-[#8a7a7a] bg-[#dcc2c4]" />
        <div className="mt-[5px] flex h-[44px] w-[201px] items-center overflow-hidden border-t-3 border-l-2 border-[#757575] bg-white pb-[6px] pl-[9px] text-[22px] whitespace-nowrap">MAXScript によう</div>
      </div>

      <div className="ml-[6px] flex min-w-0 flex-1 flex-col pt-[9px]">
        <div className="flex h-[44px] items-center">
          <div className="flex h-full flex-1 items-center border-t-2 border-r-2 border-b-2 border-l-2 border-[#9a9a9a] border-r-white border-b-white pl-[12px]">1 個のオブジェクトが選択されました</div>
          <div className="flex w-[740px] items-center pl-[11px]">
            <Svg box="0 0 24 34" className="h-[36px] w-[34px]">
              <circle cx="12" cy="11" r="9" fill="#d98a90" stroke="#5b2a2e" strokeWidth="2" />
              <path d="M9 20h6v5H9zM12 25v8" strokeWidth="2.500" />
            </Svg>
            <Svg className="ml-[22px] size-[34px]">
              <path d="M7 11V6a5 5 0 0 1 10 0v5" strokeWidth="2" />
              <path d="M5 11h14v12H5z" fill="#f3dcc0" strokeWidth="1.500" />
              <path d="M12 14v5" strokeWidth="2" />
            </Svg>
            <Svg className="ml-[23px] size-[34px]">
              <path d="M2 2h20v20H2zM12 2v5M12 17v5M2 12h5M17 12h5" fill="#f7f7f7" strokeWidth="1.500" />
              <circle cx="12" cy="12" r="4.500" fill="#fff" />
            </Svg>
            <div className="ml-[10px] flex gap-[26px]">
              <Coord axis="X" />
              <Coord axis="Y" />
              <Coord axis="Z" />
            </div>
          </div>
        </div>
        <div className="mt-[9px] flex flex-1">
          <div className="flex flex-1 items-center border-t-2 border-l-2 border-[#9a9a9a] pl-[12px]">クリックまたはドラッグをして、オブジェクトを選択します</div>
          <button aria-label="適応デグラデーション" className="mr-[6px] flex w-[46px] items-center justify-center border-t-3 border-l-2 border-[#a0a0a0] bg-[#e8cd55]">
            <Svg className="size-[34px]">
              <path d="M3 6l4-4h14v15l-4 5H3zM3 6h14v16M17 6l4-4" fill="#fff" strokeWidth="1.800" />
            </Svg>
          </button>
        </div>
      </div>

      <div className="flex w-[209px] shrink-0 flex-col pt-[9px]">
        <div className="flex h-[44px] items-center border-2 border-white border-t-[#9a9a9a] border-l-[#9a9a9a] pl-[8px] text-[22px]">グリッド = 10.0</div>
        <div className="mt-[9px] flex flex-1 items-center border-t-2 border-l-2 border-[#9a9a9a] pl-[8px] text-[22px]">時間タグを追加</div>
      </div>

      <Btn label="キーを設定" className="mt-[7px] ml-[5px] h-[92px] w-[95px] shrink-0">
        <Svg box="0 0 48 24" className="h-[24px] w-[48px]">
          <circle cx="8" cy="11" r="6.500" stroke="#000" strokeWidth="3" />
          <path d="M15 8h32v12h-4v-6h-4v8h-4v-8H15z" fill="#000" stroke="none" />
        </Svg>
      </Btn>
      <div className="mt-[7px] ml-[6px] flex shrink-0 flex-col gap-[2px] text-[22px]">
        <Btn className="h-[45px] w-[133px]">オートキー</Btn>
        <Btn className="h-[45px] w-[133px]">セットキー</Btn>
      </div>
      <div className="mt-[7px] ml-[8px] w-[244px] shrink-0">
        <Combo label="キー セット" value="選択" size="text-[22px]" className="h-[42px] w-[242px]" />
        <div className="mt-[5px] flex text-[22px]">
          <Svg box="0 0 30 38" className="mx-[9px] h-[44px] w-[34px]">
            <path d="M4 34c12 0 8-30 22-30" stroke="#b02040" strokeWidth="2" />
            <path d="M18 4h10M1 34h10" stroke="#7a5aa8" strokeWidth="3" />
          </Svg>
          <Btn className="ml-[3px] h-[45px] w-[187px]">キー フィルタ...</Btn>
        </div>
      </div>

      <div className="ml-[16px] w-[246px] shrink-0 pt-[9px]">
        <div className="flex justify-between">
          <PlayIcon name="start" />
          <PlayIcon name="prev" />
          <PlayIcon name="play" flyout />
          <PlayIcon name="next" />
          <PlayIcon name="end" />
        </div>
        <div className="mt-[5px] flex items-center">
          <PlayIcon name="keyMode" />
          <input
            aria-label="現在のフレーム"
            defaultValue="0"
            className="ml-[10px] h-[44px] w-[130px] border-t-4 border-l-3 border-t-[#222] border-l-[#222] bg-white pl-[6px] font-['DejaVu_Sans',sans-serif] text-[20px] outline-none"
          />
          <Spin className="ml-[5px] h-[42px]" />
          <Svg className="ml-[7px] size-[34px] shrink-0">
            <path d="M1 2h20v18H1z" fill="#eef0f3" stroke="#33485e" strokeWidth="1.600" />
            <path d="M3 4h9v8H3z" fill="#3f6f9c" stroke="none" />
            <circle cx="18" cy="17" r="5.500" fill="#fff" stroke="#33485e" />
            <path d="M18 13v4h4" stroke="#33485e" />
          </Svg>
        </div>
      </div>
      <div className="ml-[16px] grid shrink-0 grid-cols-4 content-start gap-y-[5px] pt-[9px]">
        <NavIcon name="zoom" />
        <NavIcon name="zoomAll" />
        <NavIcon name="extents" flyout />
        <NavIcon name="extentsAll" flyout />
        <NavIcon name="regionZoom" />
        <NavIcon name="pan" flyout />
        <NavIcon name="orbit" flyout />
        <NavIcon name="maximize" />
      </div>
    </footer>
  )
}

export default function App() {
  return (
    <div className="min-h-screen bg-white pt-[419px] pr-[30px] pl-[28px] font-['Noto_Sans','Noto_Sans_CJK_JP',sans-serif]">
      <MenuBar />
      <Toolbar />
      <main className="flex bg-[#efefef]">
        <SideBar />
        <div className="flex min-w-0 flex-1 flex-col">
          <Viewport />
          <TimeLine />
        </div>
        <CommandPanel />
      </main>
      <StatusBar />
    </div>
  )
}
